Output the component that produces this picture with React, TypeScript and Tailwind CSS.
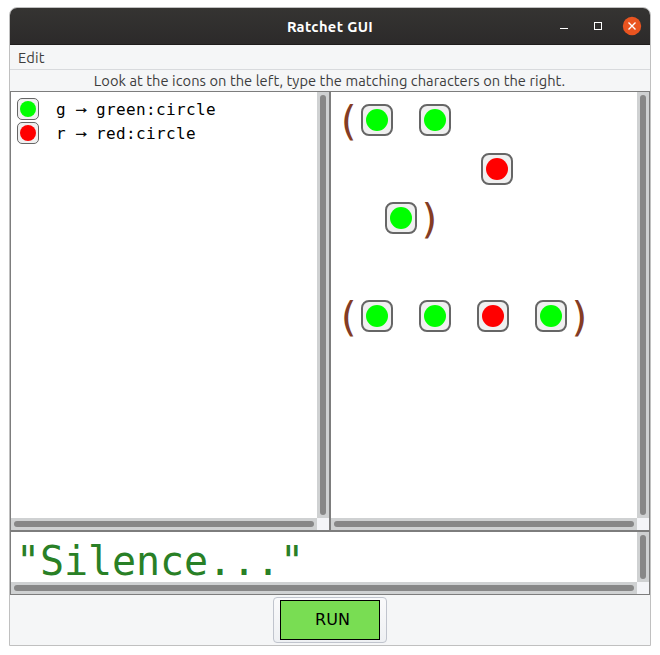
import React from "react";

type Color = "green" | "red";

const fills: Record<Color, string> = { green: "bg-[#00ff00]", red: "bg-[#ff0000]" };

function SmallIcon({ color }: { color: Color }) {
  return (
    <span className="flex size-[22px] shrink-0 items-center justify-center rounded-[5px] border border-[#666] bg-[#f0f0f0]">
      <span className={`size-4 rounded-full ${fills[color]}`} />
    </span>
  );
}

function Token({ color }: { color: Color }) {
  return (
    <span className="mr-[2px] flex size-8 shrink-0 items-center justify-center rounded-[8px] border-2 border-[#666] bg-[#f0f0f0]">
      <span className={`size-[22px] rounded-full ${fills[color]}`} />
    </span>
  );
}

function Paren({ children }: { children: string }) {
  return (
    <span className="-ml-px mr-px w-6 shrink-0 font-['DejaVu_Sans_Mono',monospace] text-[40px] leading-[34px] text-[#843c24]">
      {children}
    </span>
  );
}

function Row({ children }: { children?: React.ReactNode }) {
  return <div className="flex h-[49px] items-start">{children}</div>;
}

function Pane({ children, className }: { children: React.ReactNode; className: string }) {
  return (
    <div className={`grid grid-cols-[1fr_12px] grid-rows-[1fr_12px] border border-[#7d7d7d] bg-white ${className}`}>
      <div className="min-h-0 min-w-0">{children}</div>
      <div className="bg-[#cfd1d2] p-[3px]">
        <div className="h-full rounded-full bg-[#878787]" />
      </div>
      <div className="bg-[#cfd1d2] p-[3px]">
        <div className="h-full rounded-full bg-[#878787]" />
      </div>
      <div className="bg-[#f4f5f8]" />
    </div>
  );
}

function Entry({ color, symbol, name }: { color: Color; symbol: string; name: string }) {
  return (
    <div className="flex h-6 items-center gap-[17px]">
      <SmallIcon color={color} />
      <span className="flex whitespace-pre pt-[2px] font-['DejaVu_Sans_Mono',monospace] text-base leading-6 tracking-[0.367px] text-black">
        <span className="w-[17px]">{symbol}</span>
        <span className="w-[23px] font-['Liberation_Sans',sans-serif] text-[17px] leading-5 tracking-normal [-webkit-text-stroke:0.4px_black]">→</span>
        <span>{name}</span>
      </span>
    </div>
  );
}

export default function App() {
  return (
    <div className="h-[655px] w-[660px] overflow-hidden bg-white pl-[9px] pt-[7px] font-['Ubuntu','Noto_Sans',sans-serif] text-[#3d3d3d]">
      <div className="flex h-[639px] w-[642px] flex-col overflow-hidden rounded-t-[8px] border border-[#c0c0c0] bg-[#f5f6f7]">
        <div className="grid h-[37px] shrink-0 grid-cols-[1fr_auto_1fr] items-center border-b border-[#1f1d1c] bg-linear-to-b from-[#353432] to-[#2c2a2a]">
          <span />
          <span className="pt-px text-[14.67px] font-bold tracking-[0.36px] text-white">Ratchet GUI</span>
          <div className="flex items-center justify-end pr-2">
            <svg width="90" height="20" viewBox="0 0 90 20" fill="none">
              <path d="M8 12.5h8" stroke="white" />
              <rect x="42.500" y="6.500" width="7" height="7" stroke="white" />
              <circle cx="80" cy="10" r="9.200" fill="#e95420" />
              <path d="m76.500 6.500 7 7m0-7-7 7" stroke="white" strokeWidth="1.400" />
            </svg>
          </div>
        </div>
        <div className="flex h-[25px] shrink-0 items-center border-b border-[#d8dadd] px-2 pt-px text-[14.67px] tracking-[0.2px]">Edit</div>
        <div className="flex h-[21px] shrink-0 items-center justify-center pr-px text-[14.67px] leading-5 tracking-[0.06px] whitespace-nowrap">
          Look at the icons on the left, type the matching characters on the right.
        </div>
        <div className="flex h-[440px] shrink-0">
          <Pane className="w-80">
            <div className="pl-[6px] pt-[5px]">
              <Entry color="green" symbol="g" name="green:circle" />
              <Entry color="red" symbol="r" name="red:circle" />
            </div>
          </Pane>
          <Pane className="w-80">
            <div className="pl-[6px] pt-3">
              <Row>
                <Paren>(</Paren>
                <Token color="green" />
                <span className="w-6" />
                <Token color="green" />
              </Row>
              <Row>
                <span className="w-36" />
                <Token color="red" />
              </Row>
              <Row>
                <span className="w-12" />
                <Token color="green" />
                <Paren>)</Paren>
              </Row>
              <Row />
              <Row>
                <Paren>(</Paren>
                <Token color="green" />
                <span className="w-6" />
                <Token color="green" />
                <span className="w-6" />
                <Token color="red" />
                <span className="w-6" />
                <Token color="green" />
                <Paren>)</Paren>
              </Row>
            </div>
          </Pane>
        </div>
        <Pane className="h-16 shrink-0">
          <div className="pl-[5px] pt-[9px] font-['DejaVu_Sans_Mono',monospace] text-[40px] leading-[41px] tracking-[-0.08px] text-[#298026]">
            "Silence..."
          </div>
        </Pane>
        <div className="flex grow items-center justify-center">
          <button className="flex h-[46px] w-[114px] items-center justify-center rounded-[4px] border border-[#c0c4cd] bg-linear-to-b from-[#fafafb] to-[#eef0f3]">
            <span className="flex h-10 w-[100px] items-center justify-center border border-black bg-[#79dd53] pl-[5px] font-['DejaVu_Sans',sans-serif] text-base text-black">
              RUN
            </span>
          </button>
        </div>
      </div>
    </div>
  );
}
